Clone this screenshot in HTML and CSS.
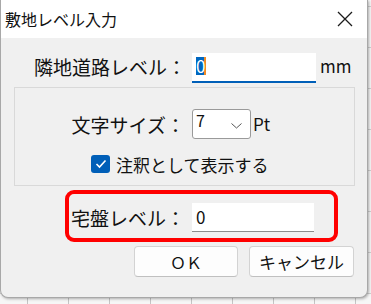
FILE: index.html
```html
<!DOCTYPE html>
<html lang="ja">
<head>
  <meta charset="UTF-8" />
  <title>敷地レベル入力</title>
  <link rel="stylesheet" href="styles.css">
</head>
<body>
  <div class="dialog">
    <div class="titlebar">
      <span class="title">敷地レベル入力</span>
      <svg class="close" width="16" height="16" viewBox="0 0 16 16">
        <path d="M1 1 L15 15 M15 1 L1 15" stroke="#1b1b1b" stroke-width="1.3" fill="none" />
      </svg>
    </div>

    <div class="content">
      <div class="field top-field">
        <span class="field-label">隣地道路レベル：</span>
        <div class="textbox focused"><span class="selected">0</span></div>
        <span class="unit">mm</span>
      </div>

      <div class="group">
        <div class="field">
          <span class="field-label">文字サイズ：</span>
          <div class="select">
            <span>7</span>
            <svg width="11" height="6" viewBox="0 0 11 6">
              <path d="M0.5 0.5 L5.5 5 L10.5 0.5" stroke="#555" stroke-width="1" fill="none" />
            </svg>
          </div>
          <span class="unit">Pt</span>
        </div>
        <label class="check-row">
          <span class="checkbox">
            <svg width="12" height="10" viewBox="0 0 12 10">
              <path d="M1.5 5 L4.5 8 L10.5 1.5" stroke="#fff" stroke-width="1.6" fill="none" />
            </svg>
          </span>
          注釈として表示する
        </label>
      </div>

      <div class="field red-box">
        <span class="field-label">宅盤レベル：</span>
        <div class="textbox"><span class="value">0</span></div>
      </div>

      <div class="buttons">
        <button class="btn ok">ＯＫ</button>
        <button class="btn cancel">キャンセル</button>
      </div>
    </div>
  </div>
</body>
</html>
```

FILE: styles.css
```css
* {
  box-sizing: border-box;
}
body {
  margin: 0;
  width: 371px;
  height: 304px;
  overflow: hidden;
  font-family: "Noto Sans CJK JP", sans-serif;
  color: #111;
  background-color: #f6f6f6;
  background-image:
    linear-gradient(90deg, #c4c4c4 1px, transparent 1px),
    linear-gradient(#d0d0d0 1px, transparent 1px);
  background-size: 41px 41px;
  background-position: 27px 0, 0 6px;
}
.dialog {
  width: 368px;
  height: 298px;
  background: #f0f0f0;
  border: 1px solid #a8a8a8;
  border-top: none;
  border-radius: 0 0 8px 8px;
  box-shadow: 1px 1px 3px rgba(0, 0, 0, 0.3);
  display: flex;
  flex-direction: column;
  overflow: hidden;
}
.titlebar {
  height: 38px;
  background: #fff;
  display: flex;
  align-items: center;
  justify-content: space-between;
  padding: 0 14px 0 4px;
}
.title {
  font-size: 16px;
  line-height: 1;
}
.close {
  display: block;
  margin-top: -1px;
}
.content {
  flex: 1;
  display: flex;
  flex-direction: column;
  padding-top: 15px;
}
.field {
  display: flex;
  align-items: center;
}
.field-label {
  font-size: 19px;
  line-height: 1;
  text-align: right;
  margin-right: 7px;
  white-space: nowrap;
}
.top-field {
  height: 30px;
}
.top-field .field-label {
  width: 185px;
  margin-top: -4px;
}
.textbox {
  width: 122px;
  height: 29px;
  background: #fff;
  border-bottom: 1px solid #8c8c8c;
  display: flex;
  align-items: center;
  padding-left: 4px;
  font-size: 17px;
}
.textbox.focused {
  width: 124px;
  height: 30px;
  margin-left: -1px;
  border-bottom: 2px solid #005fb8;
}
.selected {
  display: inline-block;
  width: 10px;
  height: 18px;
  line-height: 18px;
  text-align: center;
  background: #0067c0;
  color: #fff;
  border-right: 2px solid #f08a24;
  margin-top: -3px;
}
.value {
  margin-top: -2px;
}
.unit {
  font-size: 17px;
  margin-left: 4px;
  margin-top: -5px;
}
.group {
  margin: 4px 12px 0 13px;
  height: 99px;
  border: 1px solid #d9d9d9;
  padding-top: 21px;
}
.group .field {
  height: 30px;
}
.group .field-label {
  width: 170px;
}
.select {
  width: 59px;
  height: 30px;
  background: #fff;
  border: 1px solid #9a9a9a;
  border-radius: 3px;
  display: flex;
  justify-content: space-between;
  padding: 0 8px 0 3px;
  font-size: 16px;
}
.select span {
  line-height: 20px;
}
.select svg {
  margin-top: 13px;
}
.select + .unit {
  margin-left: 2px;
  margin-top: -2px;
}
.check-row {
  display: flex;
  align-items: center;
  height: 22px;
  margin-top: 14px;
  padding-left: 76px;
  font-size: 17px;
}
.checkbox {
  width: 19px;
  height: 18px;
  border-radius: 3px;
  background: #005fb8;
  display: flex;
  align-items: center;
  justify-content: center;
  margin-right: 6px;
}
.red-box {
  margin: 4px 0 0 64px;
  width: 273px;
  height: 52px;
  border: 4px solid #f00;
  border-radius: 9px;
  padding-top: 3px;
}
.red-box .field-label {
  width: 117px;
  margin-left: -1px;
}
.buttons {
  display: flex;
  justify-content: flex-end;
  gap: 11px;
  margin-top: 4px;
  padding-right: 13px;
}
.btn {
  height: 31px;
  background: #fdfdfd;
  border: 1px solid #d3d3d3;
  border-bottom-color: #c0c0c0;
  border-radius: 4px;
  font-family: "Noto Sans CJK JP", sans-serif;
  font-size: 16px;
  color: #111;
  padding: 0;
}
.ok {
  width: 104px;
}
.cancel {
  width: 105px;
  font-size: 17px;
}
```
